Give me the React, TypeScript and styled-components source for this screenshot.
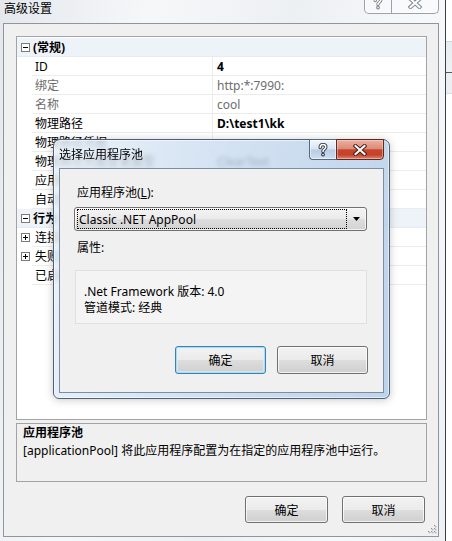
import React from "react";
import styled, { createGlobalStyle, css } from "styled-components";

const FONT = `"Noto Sans", "Noto Sans CJK SC", sans-serif`;

const GlobalStyle = createGlobalStyle`
  html, body { margin: 0; padding: 0; background: #ffffff; }
  body { font-family: ${FONT}; font-size: 12px; color: #000; }
  #root { width: 452px; height: 541px; overflow: hidden; }
`;

const Page = styled.div`
  position: relative;
  display: flex;
  width: 452px;
  height: 541px;
  overflow: hidden;
  background: #ffffff;
`;

const OuterWindow = styled.div`
  width: 446px;
  height: 541px;
  box-sizing: border-box;
  border-right: 1px solid #3c4046;
  display: flex;
  flex-direction: column;
  background: linear-gradient(100deg, #e4e8ed 0%, #f6f7f9 28%, #edf0f3 55%, #f7f8fa 80%, #eef1f4 100%);
`;

const OuterTitleBar = styled.div`
  height: 23px;
  flex-shrink: 0;
  display: flex;
  align-items: flex-start;
  padding-left: 4px;
`;

const WindowTitle = styled.div`
  padding-top: 1px;
  line-height: 16px;
  font-size: 12px;
  color: #000;
`;

const CaptionGroup = styled.div<{ $inner?: boolean }>`
  margin-left: auto;
  display: flex;
  align-self: flex-start;
  ${(p) =>
    p.$inner
      ? css`
          margin-top: -1px;
          margin-right: 5px;
          height: 21px;
        `
      : css`
          margin-top: -8px;
          margin-right: 6px;
          height: 21px;
          border: 1px solid #98a2ad;
          border-top: none;
          border-radius: 0 0 5px 5px;
          background: rgba(255, 255, 255, 0.35);
          box-shadow: inset 0 0 0 1px rgba(255, 255, 255, 0.6);
        `}
`;

const CaptionButton = styled.div<{ $w: number; $kind: "help" | "close"; $inner?: boolean }>`
  width: ${(p) => p.$w}px;
  height: 100%;
  box-sizing: border-box;
  display: flex;
  align-items: center;
  justify-content: center;
  ${(p) =>
    !p.$inner &&
    p.$kind === "help" &&
    css`
      border-right: 1px solid #98a2ad;
    `}
  ${(p) =>
    p.$inner &&
    p.$kind === "help" &&
    css`
      border: 1px solid #56687b;
      border-right: none;
      border-radius: 0 0 0 4px;
      background: linear-gradient(
        180deg,
        rgba(255, 255, 255, 0.75) 0%,
        rgba(222, 232, 243, 0.7) 48%,
        rgba(178, 198, 222, 0.75) 52%,
        rgba(205, 222, 240, 0.8) 100%
      );
      box-shadow: inset 0 0 0 1px rgba(255, 255, 255, 0.55);
    `}
  ${(p) =>
    p.$inner &&
    p.$kind === "close" &&
    css`
      border: 1px solid #5b2a22;
      border-radius: 0 0 4px 0;
      background: linear-gradient(
        180deg,
        #eab1a3 0%,
        #dc8b78 45%,
        #c7452d 52%,
        #c5412a 78%,
        #dd8a72 100%
      );
      box-shadow: inset 0 0 0 1px rgba(255, 220, 210, 0.45);
    `}
`;

const HelpGlyph = ({ dark }: { dark?: boolean }) => (
  <svg width="12" height="14" viewBox="0 0 12 14">
    <path
      d="M3.2 4.6 C3.2 2.4 4.6 1.6 6 1.6 C7.6 1.6 8.8 2.6 8.8 4.1 C8.8 5.5 7.8 6 6.9 6.6 C6.2 7.1 6 7.6 6 8.6"
      fill="none"
      stroke={dark ? "#2f3a46" : "#7d8792"}
      strokeWidth="3.4"
      strokeLinecap="round"
    />
    <circle cx="6" cy="11.6" r="1.9" fill={dark ? "#2f3a46" : "#7d8792"} />
    <path
      d="M3.2 4.6 C3.2 2.4 4.6 1.6 6 1.6 C7.6 1.6 8.8 2.6 8.8 4.1 C8.8 5.5 7.8 6 6.9 6.6 C6.2 7.1 6 7.6 6 8.6"
      fill="none"
      stroke="#ffffff"
      strokeWidth="1.5"
      strokeLinecap="round"
    />
    <circle cx="6" cy="11.6" r="0.8" fill="#ffffff" />
  </svg>
);

const CloseGlyph = ({ dark }: { dark?: boolean }) => (
  <svg width="14" height="12" viewBox="0 0 14 12">
    <path
      d="M2.5 2 L11.5 10 M11.5 2 L2.5 10"
      stroke={dark ? "#4a2119" : "#7d8792"}
      strokeWidth="4"
      strokeLinecap="square"
    />
    <path d="M2.5 2 L11.5 10 M11.5 2 L2.5 10" stroke="#ffffff" strokeWidth="2" strokeLinecap="square" />
  </svg>
);

const OuterClient = styled.div`
  position: relative;
  flex: 1;
  margin: 0 6px 4px 3px;
  box-sizing: border-box;
  border: 1px solid #8f959b;
  background: #f0f0f0;
  padding: 12px 11px 13px 12px;
  display: flex;
  flex-direction: column;
`;

const PropertyGrid = styled.div`
  height: 384px;
  flex-shrink: 0;
  box-sizing: border-box;
  border: 1px solid #a3a3a3;
  background: #ffffff;
  padding-top: 1px;
  overflow: hidden;
`;

const GridRow = styled.div<{ $category?: boolean }>`
  display: flex;
  height: 19px;
  ${(p) =>
    p.$category &&
    css`
      background: #eef3f9;
      border-bottom: 1px solid #e6ebf1;
      box-sizing: border-box;
    `}
`;

const MarginCell = styled.div`
  width: 15px;
  flex-shrink: 0;
  display: flex;
  align-items: center;
  justify-content: center;
  padding-left: 1px;
  box-sizing: border-box;
`;

const ExpandBox = styled.div<{ $open: boolean }>`
  position: relative;
  width: 9px;
  height: 9px;
  box-sizing: border-box;
  border: 1px solid #7b7b7b;
  background: #ffffff;
  &::before {
    content: "";
    position: absolute;
    left: 1px;
    top: 3px;
    width: 5px;
    height: 1px;
    background: #000;
  }
  ${(p) =>
    !p.$open &&
    css`
      &::after {
        content: "";
        position: absolute;
        left: 3px;
        top: 1px;
        width: 1px;
        height: 5px;
        background: #000;
      }
    `}
`;

const CategoryLabel = styled.div`
  padding: 2px 0 0 1px;
  line-height: 16px;
  font-weight: bold;
  white-space: nowrap;
`;

const NameCell = styled.div<{ $muted?: boolean }>`
  width: 181px;
  flex-shrink: 0;
  box-sizing: border-box;
  border-right: 1px solid #ececec;
  border-bottom: 1px solid #ececec;
  padding: 2px 0 0 3px;
  line-height: 16px;
  white-space: nowrap;
  overflow: hidden;
  color: ${(p) => (p.$muted ? "#6d6d6d" : "#000")};
`;

const ValueCell = styled.div<{ $muted?: boolean; $bold?: boolean }>`
  flex: 1;
  border-bottom: 1px solid #ececec;
  padding: 2px 0 0 4px;
  line-height: 16px;
  white-space: nowrap;
  overflow: hidden;
  color: ${(p) => (p.$muted ? "#6d6d6d" : "#000")};
  font-weight: ${(p) => (p.$bold ? "bold" : "normal")};
`;

const DescriptionPanel = styled.div`
  margin-top: 3px;
  height: 59px;
  flex-shrink: 0;
  box-sizing: border-box;
  border: 1px solid #a3a3a3;
  background: #f0f0f0;
  padding: 0 6px;
`;

const DescLine = styled.div<{ $bold?: boolean }>`
  line-height: 18px;
  white-space: nowrap;
  font-weight: ${(p) => (p.$bold ? "bold" : "normal")};
`;

const ButtonRow = styled.div<{ $gap: number; $top: number; $right: number }>`
  display: flex;
  justify-content: flex-end;
  gap: ${(p) => p.$gap}px;
  margin-top: ${(p) => p.$top}px;
  margin-right: ${(p) => p.$right}px;
  flex-shrink: 0;
`;

const PushButton = styled.div<{ $w: number; $h: number; $default?: boolean }>`
  width: ${(p) => p.$w}px;
  height: ${(p) => p.$h}px;
  box-sizing: border-box;
  border: 1px solid ${(p) => (p.$default ? "#3c7fb1" : "#707070")};
  border-radius: 3px;
  display: flex;
  align-items: center;
  justify-content: center;
  font-size: 12px;
  color: #000;
  background: linear-gradient(180deg, #f2f2f2 0%, #ebebeb 50%, #dddddd 51%, #cfcfcf 100%);
  box-shadow: ${(p) =>
    p.$default
      ? "inset 0 0 0 1px #a9dcf5, inset 0 0 0 2px rgba(220, 240, 252, 0.6)"
      : "inset 0 0 0 1px rgba(255, 255, 255, 0.75)"};
`;

const ResizeGrip = styled.svg`
  position: absolute;
  right: 1px;
  bottom: 2px;
`;

const BackdropStrip = styled.div`
  flex: 1;
  display: flex;
  flex-direction: column;
  background: #ffffff;
`;

const BackdropBox = styled.div`
  margin-top: 41px;
  height: 53px;
  box-sizing: border-box;
  border-top: 1px solid #cdd5dc;
  border-bottom: 1px solid #d9dee3;
  background: linear-gradient(
    180deg,
    #e6edf1 0px,
    #eef2f4 30px,
    #55595d 30px,
    #55595d 31px,
    #eceff2 31px
  );
`;

/* ---------- modal dialog ---------- */

const ModalDialog = styled.div`
  position: absolute;
  left: 53px;
  top: 139px;
  width: 337px;
  height: 260px;
  box-sizing: border-box;
  border: 1px solid #4f6174;
  border-radius: 7px 7px 6px 6px;
  background: linear-gradient(
    100deg,
    rgba(232, 240, 249, 0.82) 0%,
    rgba(206, 223, 241, 0.8) 35%,
    rgba(190, 211, 235, 0.82) 70%,
    rgba(178, 204, 232, 0.84) 100%
  );
  backdrop-filter: blur(2px);
  box-shadow: inset 0 0 0 1px rgba(255, 255, 255, 0.55), 0 1px 8px rgba(0, 0, 0, 0.22);
  display: flex;
  flex-direction: column;
`;

const DialogTitleBar = styled.div`
  height: 28px;
  flex-shrink: 0;
  display: flex;
  align-items: center;
  padding-left: 5px;
`;

const DialogTitle = styled.div`
  line-height: 16px;
  font-size: 12px;
  color: #000;
  padding-top: 1px;
`;

const DialogClient = styled.div`
  margin: 0 5px;
  height: 225px;
  flex-shrink: 0;
  box-sizing: border-box;
  border: 1px solid #7b8fa4;
  background: #f0f0f0;
  padding: 0 16px 0 14px;
  display: flex;
  flex-direction: column;
`;

const FieldLabel = styled.div<{ $top: number }>`
  margin-top: ${(p) => p.$top}px;
  padding-left: 3px;
  line-height: 16px;
  height: 16px;
  white-space: nowrap;
`;

const Mnemonic = styled.span`
  text-decoration: underline;
`;

const ComboBox = styled.div`
  margin-top: 6px;
  height: 24px;
  box-sizing: border-box;
  border: 1px solid #707070;
  border-radius: 3px;
  background: linear-gradient(180deg, #f3f3f3 0%, #ebebeb 50%, #dedede 51%, #d2d2d2 100%);
  box-shadow: inset 0 0 0 1px rgba(255, 255, 255, 0.7);
  display: flex;
  align-items: center;
  padding: 1px 0 1px 2px;
`;

const ComboFocus = styled.div`
  width: 270px;
  height: 20px;
  box-sizing: border-box;
  border: 1px dotted #000;
  display: flex;
  align-items: center;
  padding-left: 1px;
  font-family: "Noto Sans", sans-serif;
  font-size: 12px;
  white-space: nowrap;
`;

const ComboArrow = styled.div`
  flex: 1;
  display: flex;
  align-items: center;
  justify-content: center;
  padding-right: 1px;
`;

const InfoBox = styled.div`
  margin-top: 14px;
  margin-left: 1px;
  height: 54px;
  box-sizing: border-box;
  border: 1px solid #e0e0e0;
  background: #f4f4f4;
  padding: 13px 8px 0;
`;

const InfoLine = styled.div`
  line-height: 16px;
  white-space: nowrap;
`;

type Row =
  | { kind: "cat"; label: string }
  | {
      kind: "prop";
      name: string;
      value: string;
      muted?: boolean;
      bold?: boolean;
      expandable?: boolean;
    };

const rows: Row[] = [
  { kind: "cat", label: "(常规)" },
  { kind: "prop", name: "ID", value: "4", bold: true },
  { kind: "prop", name: "绑定", value: "http:*:7990:", muted: true },
  { kind: "prop", name: "名称", value: "cool", muted: true },
  { kind: "prop", name: "物理路径", value: "D:\\test1\\kk", bold: true },
  { kind: "prop", name: "物理路径凭据", value: "" },
  { kind: "prop", name: "物理路径凭据登录类型", value: "ClearText" },
  { kind: "prop", name: "应用程序池", value: "Classic .NET AppPool", bold: true },
  { kind: "prop", name: "自动启动", value: "False" },
  { kind: "cat", label: "行为" },
  { kind: "prop", name: "连接限制", value: "", expandable: true },
  { kind: "prop", name: "失败请求跟踪", value: "", expandable: true },
  { kind: "prop", name: "已启用的协议", value: "http" },
];

export default function App() {
  return (
    <>
      <GlobalStyle />
      <Page>
        <OuterWindow>
          <OuterTitleBar>
            <WindowTitle>高级设置</WindowTitle>
            <CaptionGroup>
              <CaptionButton $w={27} $kind="help">
                <HelpGlyph />
              </CaptionButton>
              <CaptionButton $w={46} $kind="close">
                <CloseGlyph />
              </CaptionButton>
            </CaptionGroup>
          </OuterTitleBar>
          <OuterClient>
            <PropertyGrid>
              {rows.map((r, i) =>
                r.kind === "cat" ? (
                  <GridRow key={i} $category>
                    <MarginCell>
                      <ExpandBox $open />
                    </MarginCell>
                    <CategoryLabel>{r.label}</CategoryLabel>
                  </GridRow>
                ) : (
                  <GridRow key={i}>
                    <MarginCell>{r.expandable && <ExpandBox $open={false} />}</MarginCell>
                    <NameCell $muted={r.muted}>{r.name}</NameCell>
                    <ValueCell $muted={r.muted} $bold={r.bold}>
                      {r.value}
                    </ValueCell>
                  </GridRow>
                )
              )}
            </PropertyGrid>
            <DescriptionPanel>
              <DescLine $bold>应用程序池</DescLine>
              <DescLine>[applicationPool] 将此应用程序配置为在指定的应用程序池中运行。</DescLine>
            </DescriptionPanel>
            <ButtonRow $gap={14} $top={14} $right={2}>
              <PushButton $w={83} $h={27}>确定</PushButton>
              <PushButton $w={83} $h={27}>取消</PushButton>
            </ButtonRow>
            <ResizeGrip width="10" height="10" viewBox="0 0 10 10">
              {[
                [8, 2],
                [5, 5],
                [8, 5],
                [2, 8],
                [5, 8],
                [8, 8],
              ].map(([x, y], i) => (
                <g key={i}>
                  <rect x={x} y={y} width="1.5" height="1.5" fill="#b8bcc0" />
                  <rect x={x - 1} y={y - 1} width="1.2" height="1.2" fill="#8a8f94" />
                </g>
              ))}
            </ResizeGrip>
          </OuterClient>
        </OuterWindow>
        <BackdropStrip>
          <BackdropBox />
        </BackdropStrip>

        <ModalDialog>
          <DialogTitleBar>
            <DialogTitle>选择应用程序池</DialogTitle>
            <CaptionGroup $inner>
              <CaptionButton $w={27} $kind="help" $inner>
                <HelpGlyph dark />
              </CaptionButton>
              <CaptionButton $w={48} $kind="close" $inner>
                <CloseGlyph dark />
              </CaptionButton>
            </CaptionGroup>
          </DialogTitleBar>
          <DialogClient>
            <FieldLabel $top={16}>
              应用程序池(<Mnemonic>L</Mnemonic>):
            </FieldLabel>
            <ComboBox>
              <ComboFocus>Classic .NET AppPool</ComboFocus>
              <ComboArrow>
                <svg width="7" height="4" viewBox="0 0 7 4">
                  <path d="M0 0 H7 L3.5 4 Z" fill="#000" />
                </svg>
              </ComboArrow>
            </ComboBox>
            <FieldLabel $top={9}>属性:</FieldLabel>
            <InfoBox>
              <InfoLine>.Net Framework 版本: 4.0</InfoLine>
              <InfoLine>管道模式: 经典</InfoLine>
            </InfoBox>
            <ButtonRow $gap={11} $top={22} $right={-1}>
              <PushButton $w={91} $h={28} $default>
                确定
              </PushButton>
              <PushButton $w={91} $h={28}>
                取消
              </PushButton>
            </ButtonRow>
          </DialogClient>
        </ModalDialog>
      </Page>
    </>
  );
}
